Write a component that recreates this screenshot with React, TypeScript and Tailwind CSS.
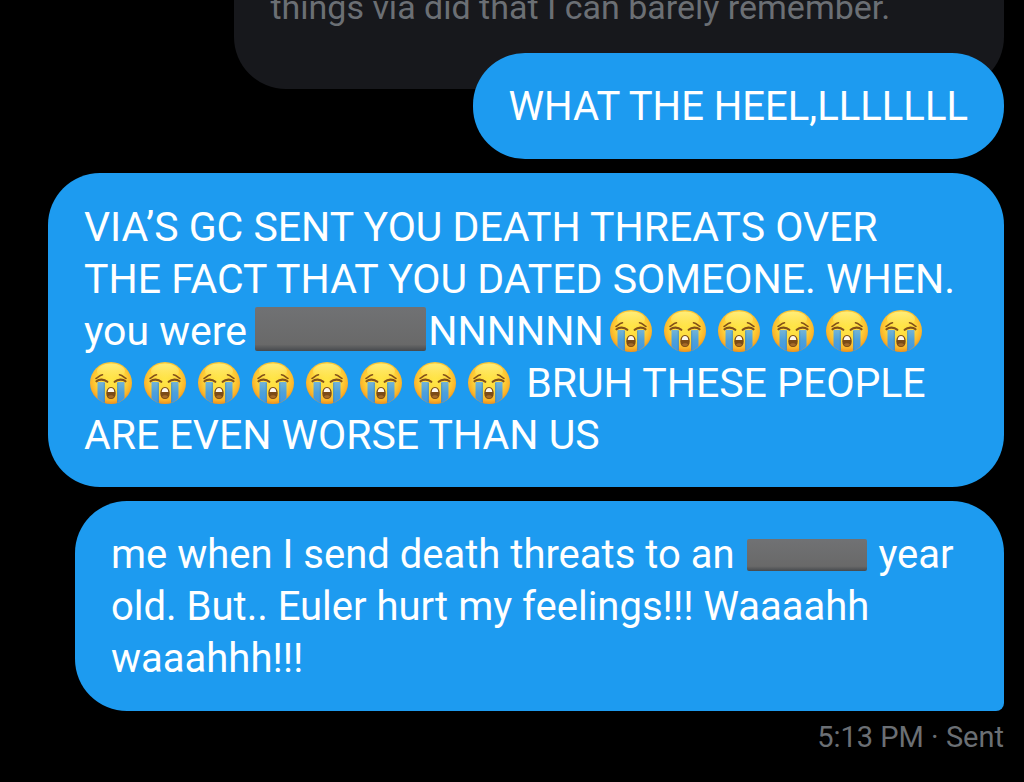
import React, { FC, ReactNode } from "react";

const CryingFace: FC = () => (
  <svg
    role="img"
    aria-label="loudly crying face"
    viewBox="0 0 42 42"
    className="mx-1.5 inline-block size-[42px] align-[-7px]"
  >
    <defs>
      <radialGradient id="face" cx="50%" cy="42%" r="60%">
        <stop offset="0" stopColor="#ffe647" />
        <stop offset="0.55" stopColor="#ffd83c" />
        <stop offset="0.82" stopColor="#fbb42a" />
        <stop offset="1" stopColor="#e8891a" />
      </radialGradient>
      <linearGradient id="shine" x1="0" y1="0" x2="0" y2="1">
        <stop offset="0" stopColor="#fff58a" stopOpacity="0.8" />
        <stop offset="1" stopColor="#fff58a" stopOpacity="0" />
      </linearGradient>
      <linearGradient id="tear" x1="0" y1="0" x2="0" y2="1">
        <stop offset="0" stopColor="#74b4d6" />
        <stop offset="0.5" stopColor="#4ba0dc" />
        <stop offset="1" stopColor="#3c97e6" />
      </linearGradient>
    </defs>
    <circle cx="21" cy="21" r="21" fill="url(#face)" />
    <ellipse cx="21" cy="9" rx="14" ry="7.5" fill="url(#shine)" />
    <path
      d="M7.500 20H14.800V41.100C12 40 9.500 38.200 7.500 36.200ZM27.200 20H34.500V36.200C32.500 38.200 30 40 27.200 41.100Z"
      fill="url(#tear)"
    />
    <path
      d="M14.300 21V40.500M27.700 21V40.500"
      stroke="#3f83ad"
      strokeWidth="1"
      opacity="0.6"
    />
    <g fill="none" stroke="#82511a" strokeLinecap="round">
      <path
        d="M6 16.500C7.500 15.800 9.500 13.300 12.500 12.800M36 16.500C34.500 15.800 32.500 13.300 29.500 12.800"
        strokeWidth="1.6"
      />
      <path
        d="M6.500 19.300C9 17 14 16.800 17.300 19.800M35.500 19.300C33 17 28 16.800 24.700 19.800"
        strokeWidth="2.2"
      />
    </g>
    <path
      d="M21 25C17.800 25 16.300 28 16.300 31.500C16.300 35 18 37 21 37S25.700 35 25.700 31.500C25.700 28 24.200 25 21 25Z"
      fill="#7b4b17"
    />
    <path
      d="M21 26C19 26 18 27.500 17.700 30H24.300C24 27.500 23 26 21 26Z"
      fill="#fff8ec"
    />
    <path
      d="M18 34.500C19.300 32.800 22.700 32.800 24 34.500C23 36.500 19 36.500 18 34.500Z"
      fill="#a56a28"
    />
  </svg>
);

const CryingFaces: FC<{ count: number }> = ({ count }) => (
  <>
    {Array.from({ length: count }, (_, i) => (
      <CryingFace key={i} />
    ))}
  </>
);

const Redacted: FC<{ className: string }> = ({ className }) => (
  <span
    className={`inline-block rounded-xs bg-linear-to-b from-[#707173] from-5% via-[#696969] via-85% to-[#46494d] ${className}`}
  />
);

const Bubble: FC<{ className?: string; children: ReactNode }> = ({
  className = "",
  children,
}) => (
  <p
    className={`rounded-[52px] bg-[#1d9bf0] px-9 pt-7 pb-[26px] leading-[52px] text-white ${className}`}
  >
    {children}
  </p>
);

const App: FC = () => {
  return (
    <main className="min-h-screen overflow-hidden bg-black pr-5 pl-12 font-[Roboto,sans-serif]">
      <div className="flex flex-col gap-3.5">
        <div className="flex flex-col items-end">
          <p className="-mt-[19px] w-[80.500%] rounded-b-[52px] bg-[#17181c] px-9 pb-14 text-[34px] leading-[52px] text-[#6b6f74]">
            things via did that I can barely remember.
          </p>
          <Bubble className="relative -mt-9 w-fit text-[40px]">
            WHAT THE HEEL,LLLLLLL
          </Bubble>
        </div>
        <Bubble className="text-[41px]">
          VIA’S GC SENT YOU DEATH THREATS OVER
          <br />
          THE FACT THAT YOU DATED SOMEONE. WHEN.
          <br />
          you were{" "}
          <Redacted className="-ml-0.5 mr-0.5 h-11 w-[171px] align-[-6px]" />
          NNNNNN
          <CryingFaces count={6} />
          <br />
          <CryingFaces count={8} /> BRUH THESE PEOPLE
          <br />
          ARE EVEN WORSE THAN US
        </Bubble>
        <Bubble className="ml-[27px] rounded-br-lg text-[40px]">
          me when I send death threats to an
          <Redacted className="mr-0.5 ml-3 h-8 w-[120px] align-[-3px]" /> year
          <br />
          old. But.. Euler hurt my feelings!!! Waaaahh
          <br />
          waaahhh!!!
        </Bubble>
      </div>
      <p className="mt-2 text-right text-[29px] leading-9 text-[#6b6f74]">
        5:13 PM · Sent
      </p>
    </main>
  );
};

export default App;
